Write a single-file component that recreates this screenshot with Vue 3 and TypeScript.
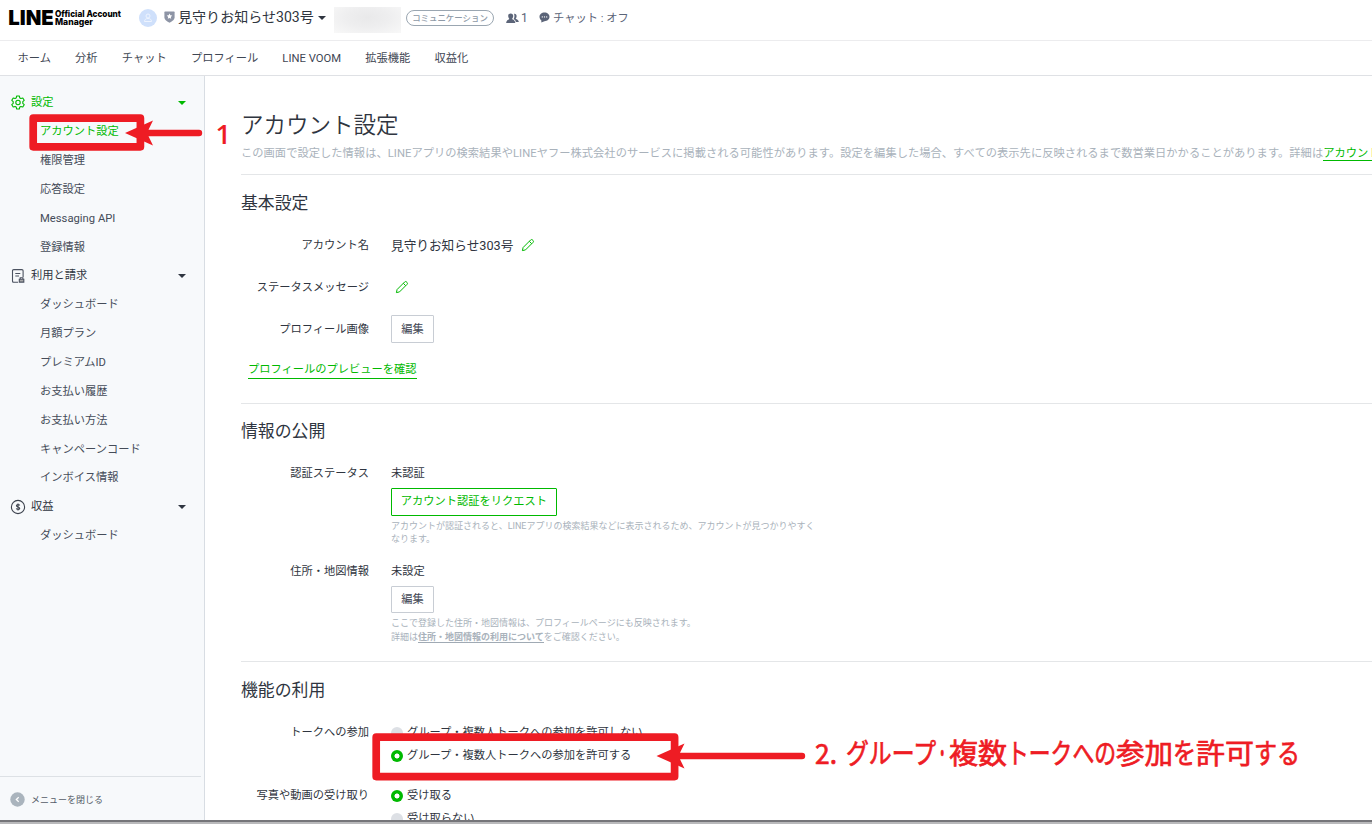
<script setup lang="ts">
interface MenuGroup {
  title: string
  icon: 'gear' | 'bill' | 'coin'
  active: boolean
  items: string[]
}

const navItems: string[] = ['ホーム', '分析', 'チャット', 'プロフィール', 'LINE VOOM', '拡張機能', '収益化']

const groups: MenuGroup[] = [
  {
    title: '設定',
    icon: 'gear',
    active: true,
    items: ['アカウント設定', '権限管理', '応答設定', 'Messaging API', '登録情報'],
  },
  {
    title: '利用と請求',
    icon: 'bill',
    active: false,
    items: ['ダッシュボード', '月額プラン', 'プレミアムID', 'お支払い履歴', 'お支払い方法', 'キャンペーンコード', 'インボイス情報'],
  },
  { title: '収益', icon: 'coin', active: false, items: ['ダッシュボード'] },
]

interface Run {
  text: string
  x: number
  width: number
}

const noteRuns: Run[] = [
  { text: '2.', x: 815, width: 22 },
  { text: 'グループ', x: 846, width: 90 },
  { text: '・', x: 936, width: 12.5 },
  { text: '複数', x: 949, width: 58 },
  { text: 'トークへの', x: 1007, width: 109 },
  { text: '参加', x: 1116, width: 57 },
  { text: 'を', x: 1173, width: 23 },
  { text: '許可', x: 1196, width: 58 },
  { text: 'する', x: 1254, width: 46 },
]
</script>

<template>
  <div class="screen">
    <header class="top">
      <svg class="logo" width="116" height="24" viewBox="0 0 116 24">
        <text class="logo-line" x="0.300" y="18.800" textLength="45.500" lengthAdjust="spacingAndGlyphs">LINE</text>
        <text class="logo-sub" x="47" y="10.700" textLength="66" lengthAdjust="spacingAndGlyphs">Official Account</text>
        <text class="logo-sub" x="47" y="19.300" textLength="38" lengthAdjust="spacingAndGlyphs">Manager</text>
      </svg>
      <span class="avatar">
        <svg width="18" height="18" viewBox="0 0 18 18" fill="none" stroke="#eef4ff" stroke-width="1">
          <circle cx="9" cy="7" r="2" />
          <path d="M5.500 12.500c0-2 1.300-3 3.500-3s3.500 1 3.500 3z" />
        </svg>
      </span>
      <svg class="shield" width="11" height="12" viewBox="0 0 11 12">
        <path d="M1 .5h9q.6 0 .6.7v5.300Q10.400 9.600 5.500 11.700Q.6 9.600.4 6.500V1.200Q.4.5 1 .5z" fill="#8d94a5" />
        <path d="M5.500 2.600l.85 1.750 1.900.25-1.400 1.350.35 1.900-1.700-.95-1.700.95.350-1.900-1.400-1.350 1.900-.25z" fill="#fff" />
      </svg>
      <span class="acct">見守りお知らせ303号</span>
      <span class="caret head-caret"></span>
      <span class="redacted"></span>
      <span class="pill">コミュニケーション</span>
      <svg class="people" width="13" height="11" viewBox="0 0 13 11" fill="#5b6478">
        <path d="M8 .8c1.700-.2 2.700.8 2.600 2.400 0 1.200-.5 1.900-1 2.400.3.900 3 .9 3.200 3.400H9.800C9.600 7.300 8.500 6.700 7.600 6.300 8.600 4.800 8.700 2.300 8 .8z" />
        <path d="M4.700.5c1.600 0 2.500 1 2.500 2.600 0 1.200-.5 2.100-1.100 2.600.2 1 3.100 1 3.200 4.300H.2C.3 6.700 3.100 6.700 3.300 5.700 2.700 5.200 2.200 4.300 2.200 3.100 2.200 1.500 3.100.5 4.700.5z" />
      </svg>
      <span class="count">1</span>
      <svg class="bubble" width="11" height="11" viewBox="0 0 11 11">
        <path d="M5.500.5c2.900 0 5 1.900 5 4.300S8.400 9.200 5.500 9.200L2.300 10.600 2.400 8.400C1.200 7.600.5 6.300.5 4.800.5 2.400 2.600.5 5.500.5z" fill="#5b6478" />
        <g fill="#fff"><circle cx="3.300" cy="4.900" r=".65" /><circle cx="5.500" cy="4.900" r=".65" /><circle cx="7.700" cy="4.900" r=".65" /></g>
      </svg>
      <span class="chat">チャット : オフ</span>
    </header>

    <nav class="nav">
      <a v-for="n in navItems" :key="n">{{ n }}</a>
    </nav>

    <div class="body">
      <aside class="side">
        <div class="menu">
          <template v-for="g in groups" :key="g.title">
            <div class="row group" :class="{ green: g.active }">
              <svg v-if="g.icon === 'gear'" class="gi" width="16" height="16" viewBox="0 0 16 16" fill="none" stroke="currentColor" stroke-width="1.100" stroke-linejoin="round">
                <path d="M6.700 1h2.600l.5 1.900 1.100.6 1.900-.5 1.400 2.300-1.400 1.400v1.600l1.400 1.400-1.400 2.300-1.900-.5-1.100.6-.5 1.900H6.700l-.5-1.900-1.100-.6-1.900.5L1.800 9.700l1.400-1.400V6.700L1.800 5.300 3.200 3l1.900.5 1.100-.6z" />
                <circle cx="8" cy="7.500" r="2.200" />
              </svg>
              <svg v-else-if="g.icon === 'bill'" class="gi" width="16" height="16" viewBox="0 0 16 16" fill="none" stroke="#4b5260" stroke-width="1.100">
                <path d="M8 14.300H3.700q-1.200 0-1.200-1.200V2.800q0-1.200 1.200-1.200h8.200q1.200 0 1.200 1.200V9M5.300 5.500h5M5.300 8h3.700" />
                <path d="M9.300 11.200h4.500v2.900H9.300z" fill="#aaa" />
                <path d="M10.200 11v-1.200h2.700V11" />
              </svg>
              <svg v-else class="gi" width="16" height="16" viewBox="0 0 16 16" fill="none" stroke="#3c424d" stroke-width="1.100">
                <circle cx="8" cy="8" r="6.600" />
                <path d="M9.700 6.500Q9.500 5.600 8 5.600T6.400 6.800Q6.400 7.700 8 8t1.700 1.300Q9.500 10.400 8 10.400T6.300 9.400M8 4.500v7.100" />
              </svg>
              <span class="gt">{{ g.title }}</span>
              <span class="caret"></span>
            </div>
            <div v-for="(item, i) in g.items" :key="item" class="row item" :class="{ green: g.active && i === 0 }">{{ item }}</div>
          </template>
        </div>
        <div class="close">
          <svg width="15" height="15" viewBox="0 0 15 15">
            <circle cx="7.500" cy="7.500" r="7.200" fill="#aab4bd" />
            <path d="M8.700 5.200L6.300 7.500l2.400 2.300" fill="none" stroke="#fff" stroke-width="1.200" />
          </svg>
          <span>メニューを閉じる</span>
        </div>
      </aside>

      <main class="main">
        <div class="intro">
          <h1>アカウント設定</h1>
          <p>この画面で設定した情報は、LINEアプリの検索結果やLINEヤフー株式会社のサービスに掲載される可能性があります。設定を編集した場合、すべての表示先に反映されるまで数営業日かかることがあります。詳細は<a>アカウント</a></p>
        </div>

        <section class="basic">
          <h2>基本設定</h2>
          <div class="field">
            <label>アカウント名</label>
            <span class="name">見守りお知らせ303号</span>
            <svg class="pencil" width="14" height="14" viewBox="0 0 14 14" fill="none" stroke="#00b900" stroke-width="1" stroke-linejoin="round">
              <path d="M1.400 12.600l.7-3.100L9.600 2q1-1 2 0l.4.400q1 1 0 2L4.500 11.900zM8.300 3.300l2.400 2.400" />
            </svg>
          </div>
          <div class="field">
            <label>ステータスメッセージ</label>
            <svg class="pencil only" width="14" height="14" viewBox="0 0 14 14" fill="none" stroke="#00b900" stroke-width="1" stroke-linejoin="round">
              <path d="M1.400 12.600l.7-3.100L9.600 2q1-1 2 0l.4.400q1 1 0 2L4.500 11.900zM8.300 3.300l2.400 2.400" />
            </svg>
          </div>
          <div class="field">
            <label>プロフィール画像</label>
            <button class="btn">編集</button>
          </div>
          <a class="preview">プロフィールのプレビューを確認</a>
        </section>

        <section class="public">
          <h2>情報の公開</h2>
          <div class="block first">
            <label>認証ステータス</label>
            <div class="value">
              <span class="state">未認証</span>
              <button class="btn primary">アカウント認証をリクエスト</button>
              <p class="help">アカウントが認証されると、LINEアプリの検索結果などに表示されるため、アカウントが見つかりやすく<br>なります。</p>
            </div>
          </div>
          <div class="block">
            <label>住所・地図情報</label>
            <div class="value">
              <span class="state">未設定</span>
              <button class="btn">編集</button>
              <p class="help">ここで登録した住所・地図情報は、プロフィールページにも反映されます。<br>詳細は<b>住所・地図情報の利用について</b>をご確認ください。</p>
            </div>
          </div>
        </section>

        <section class="features">
          <h2>機能の利用</h2>
          <div class="block talk">
            <label>トークへの参加</label>
            <div class="value">
              <span class="radio"><i></i>グループ・複数人トークへの参加を許可しない</span>
              <span class="radio on"><i></i>グループ・複数人トークへの参加を許可する</span>
            </div>
          </div>
          <div class="block media">
            <label>写真や動画の受け取り</label>
            <div class="value">
              <span class="radio on"><i></i>受け取る</span>
              <span class="radio"><i></i>受け取らない</span>
            </div>
          </div>
        </section>
      </main>
    </div>
    <div class="edge"></div>

    <svg class="notes" width="1372" height="824" viewBox="0 0 1372 824">
      <g fill="none" stroke="#ee1c24" stroke-width="7.700" stroke-linejoin="round">
        <rect x="33.200" y="118.200" width="107.200" height="28.600" />
        <rect x="376.200" y="737.200" width="298.400" height="39.400" />
      </g>
      <g fill="#ee1c24">
        <path d="M125 133L153 120.500L148.500 129.800H199a3.200 3.200 0 0 1 0 6.400H148.500L153 145.500z" />
        <path d="M656.500 756L684.500 743.500L680 752.800H802a3.200 3.200 0 0 1 0 6.400H680L684.500 768.500z" />
        <text class="one" x="215.500" y="143.500">1</text>
        <text
          v-for="r in noteRuns"
          :key="r.text"
          class="two"
          :x="r.x"
          y="763.500"
          :textLength="r.width"
          lengthAdjust="spacingAndGlyphs"
        >{{ r.text }}</text>
      </g>
    </svg>
  </div>
</template>

<style>
body {
  margin: 0;
  overflow: hidden;
}
</style>

<style scoped>
.screen {
  position: relative;
  width: 1372px;
  height: 824px;
  overflow: hidden;
  display: flex;
  flex-direction: column;
  background: #fff;
  color: #2f3540;
  font: 11.25px/17px Roboto, "Noto Sans CJK JP", sans-serif;
  white-space: nowrap;
}
.screen * {
  box-sizing: border-box;
}
h1, h2, p {
  margin: 0;
  font-weight: 400;
}
.top {
  flex: none;
  height: 41px;
  display: flex;
  align-items: center;
  padding: 0 0 5px 8px;
  border-bottom: 1px solid #ececee;
}
.logo {
  flex: none;
}
.logo-line {
  font: 900 20.500px Inter, sans-serif;
}
.logo-sub {
  font: 800 9px Inter, sans-serif;
}
.avatar {
  width: 18px;
  height: 18px;
  margin-left: 15px;
  border-radius: 50%;
  background: #cfe0fb;
}
.avatar svg {
  display: block;
}
.shield {
  margin: 0 0 1px 7px;
}
.acct {
  width: 136px;
  margin: 0 0 1px 3px;
  font-size: 14.060px;
  line-height: 20px;
}
.caret {
  width: 0;
  height: 0;
  border: 4px solid transparent;
  border-top-color: currentColor;
  border-bottom: 0;
}
.head-caret {
  margin-left: 4px;
}
.redacted {
  width: 67px;
  height: 26px;
  margin: 4px 0 0 8px;
  background: radial-gradient(ellipse at 50% 40%, #e9e9ea 0, #eeeeef 45%, #f8f8f8 100%);
}
.pill {
  width: 88px;
  height: 16px;
  margin-left: 5px;
  border: 1px solid #9aa6b1;
  border-radius: 8px;
  color: #8e9aa7;
  font-size: 8.440px;
  font-weight: 500;
  line-height: 14px;
  text-align: center;
}
.people {
  margin: 1px 0 0 12px;
}
.count {
  width: 19px;
  margin-top: 2px;
  padding-left: 2px;
  color: #5b6478;
  font-size: 12px;
}
.bubble {
  margin-left: 1px;
}
.chat {
  margin: 2px 0 0 3px;
  color: #5b6478;
  font-size: 11.250px;
}
.nav {
  flex: none;
  height: 35px;
  display: flex;
  align-items: center;
  gap: 24.200px;
  padding: 1px 0 0 17.500px;
  border-bottom: 1px solid #dfe1e5;
  color: #3f4754;
}
.body {
  flex: none;
  height: 744px;
  display: flex;
  overflow: hidden;
}
.side {
  flex: none;
  width: 205px;
  display: flex;
  flex-direction: column;
  justify-content: space-between;
  padding-top: 12.500px;
  border-right: 1px solid #d8dde3;
  background: #f7f9fb;
}
.row {
  height: 28.850px;
  display: flex;
  align-items: center;
}
.group {
  padding: 0 18.500px 0 9.500px;
  color: #2f3540;
}
.gi {
  margin-right: 5.500px;
}
.gt {
  flex: 1;
}
.item {
  padding-left: 40px;
  color: #454c59;
}
.green {
  color: #00b900;
}
.close {
  width: 201px;
  height: 44px;
  display: flex;
  align-items: center;
  gap: 6px;
  padding: 2px 0 0 10px;
  border-top: 1px solid #dde1e5;
  color: #555c68;
  font-size: 9px;
}
.close span {
  padding-top: 1px;
}
.main {
  flex: none;
  width: 1167px;
  padding-left: 36px;
  overflow: hidden;
}
.intro {
  height: 99px;
  padding-top: 33px;
  border-bottom: 1px solid #e4e6e8;
}
h1 {
  font-size: 22.500px;
  font-weight: 350;
  line-height: 32px;
}
.intro p {
  margin-top: 4px;
  color: #a9b2bb;
  letter-spacing: 0.036px;
}
.intro a {
  border-bottom: 1px solid #00b900;
  color: #00b900;
}
h2 {
  font-size: 16.880px;
  line-height: 24px;
}
.basic {
  height: 229px;
  padding-top: 16px;
  border-bottom: 1px solid #e4e6e8;
}
.basic h2 {
  margin-bottom: 9px;
}
.field {
  height: 42px;
  display: flex;
  align-items: center;
}
label {
  flex: none;
  width: 128px;
  margin-right: 22px;
  text-align: right;
}
.name {
  font-size: 12.660px;
}
.pencil {
  margin-left: 8px;
}
.pencil.only {
  margin-left: 4px;
}
.btn {
  display: block;
  width: 43px;
  height: 28px;
  padding: 0;
  border: 1px solid #c8cdd4;
  border-radius: 1px;
  background: #fff;
  color: #3f4754;
  font: inherit;
}
.btn.primary {
  width: 166px;
  padding-bottom: 1px;
  border-color: #00b900;
  color: #00b900;
}
.preview {
  display: inline-block;
  height: 19px;
  margin: 10px 0 0 7px;
  padding-top: 1px;
  border-bottom: 1px solid #00b900;
  color: #00b900;
}
.public {
  height: 258px;
  padding-top: 15px;
  border-bottom: 1px solid #e4e6e8;
}
.block {
  display: flex;
  align-items: flex-start;
}
.public .block {
  height: 98px;
}
.public h2 {
  margin-bottom: 22px;
}
.state {
  display: block;
  margin-bottom: 6px;
}
.public .block:not(.first) .btn {
  height: 27px;
}
.help {
  margin-top: 4px;
  color: #a9b2bb;
  font-size: 9px;
  line-height: 13.500px;
}
.first .help {
  margin-top: 3.500px;
}
.help b {
  border-bottom: 1px solid #a0aab4;
  font-weight: 700;
}
.features {
  padding-top: 16px;
}
.features h2 {
  margin-bottom: 22px;
}
.radio {
  display: flex;
  align-items: center;
  gap: 4px;
  height: 17px;
  margin-bottom: 6px;
}
.radio i {
  width: 12px;
  height: 12px;
  border-radius: 50%;
  background: #dde0e5;
}
.radio.on i {
  background: radial-gradient(circle, #fff 2.100px, #00b900 2.900px);
}
.talk {
  height: 63px;
}
.edge {
  flex: none;
  height: 4px;
  border-top: 2px solid #757579;
  background: #b9b9bb;
}
.notes {
  position: absolute;
  top: 0;
  left: 0;
}
.one {
  font: 600 27px "Open Sans", sans-serif;
}
.two {
  font: 400 28px "Noto Sans CJK JP", sans-serif;
  stroke: #ee1c24;
  stroke-width: 0.700px;
}
</style>
